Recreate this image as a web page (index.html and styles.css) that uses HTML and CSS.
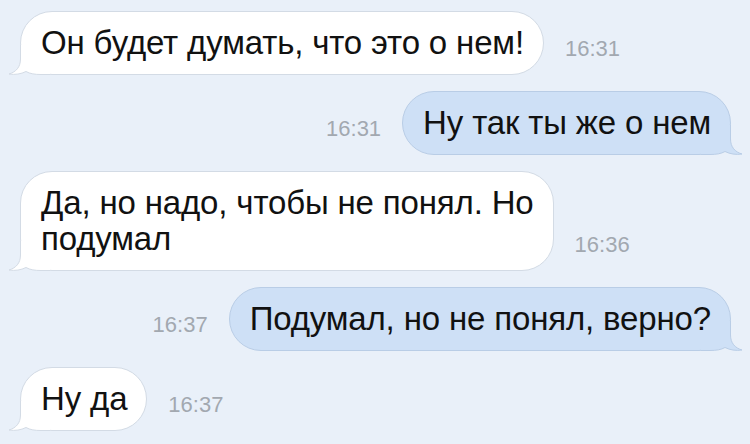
FILE: index.html
```html
<!DOCTYPE html>
<html lang="ru">
<head>
  <meta charset="UTF-8" />
  <title>Чат</title>
  <link rel="stylesheet" href="styles.css">
</head>
<body>
  <div class="chat">
    <div class="row in">
      <div class="bubble">
        <svg class="tail" width="42" height="30" viewBox="0 0 42 30"><path class="tail-fill" d="M12.5 0 L12.5 14 C12.5 22 8 27 1 29 C7 30 13 29 18 26.5 C22 28.8 27 29.5 33 29.5 L42 29.5 L42 0 Z"/><path class="tail-line" d="M12.5 0 L12.5 14 C12.5 22 8 27 1 29 C7 30 13 29 18 26.5 C22 28.8 27 29.5 33 29.5 L42 29.5"/></svg>
        <span class="text">Он будет думать, что это о нем!</span>
      </div>
      <span class="time">16:31</span>
    </div>

    <div class="row out">
      <span class="time">16:31</span>
      <div class="bubble">
        <svg class="tail" width="42" height="30" viewBox="0 0 42 30"><path class="tail-fill" d="M12.5 0 L12.5 14 C12.5 22 8 27 1 29 C7 30 13 29 18 26.5 C22 28.8 27 29.5 33 29.5 L42 29.5 L42 0 Z"/><path class="tail-line" d="M12.5 0 L12.5 14 C12.5 22 8 27 1 29 C7 30 13 29 18 26.5 C22 28.8 27 29.5 33 29.5 L42 29.5"/></svg>
        <span class="text">Ну так ты же о нем</span>
      </div>
    </div>

    <div class="row in">
      <div class="bubble">
        <svg class="tail" width="42" height="30" viewBox="0 0 42 30"><path class="tail-fill" d="M12.5 0 L12.5 14 C12.5 22 8 27 1 29 C7 30 13 29 18 26.5 C22 28.8 27 29.5 33 29.5 L42 29.5 L42 0 Z"/><path class="tail-line" d="M12.5 0 L12.5 14 C12.5 22 8 27 1 29 C7 30 13 29 18 26.5 C22 28.8 27 29.5 33 29.5 L42 29.5"/></svg>
        <span class="text">Да, но надо, чтобы не понял. Но<br>подумал</span>
      </div>
      <span class="time">16:36</span>
    </div>

    <div class="row out">
      <span class="time">16:37</span>
      <div class="bubble">
        <svg class="tail" width="42" height="30" viewBox="0 0 42 30"><path class="tail-fill" d="M12.5 0 L12.5 14 C12.5 22 8 27 1 29 C7 30 13 29 18 26.5 C22 28.8 27 29.5 33 29.5 L42 29.5 L42 0 Z"/><path class="tail-line" d="M12.5 0 L12.5 14 C12.5 22 8 27 1 29 C7 30 13 29 18 26.5 C22 28.8 27 29.5 33 29.5 L42 29.5"/></svg>
        <span class="text">Подумал, но не понял, верно?</span>
      </div>
    </div>

    <div class="row in">
      <div class="bubble">
        <svg class="tail" width="42" height="30" viewBox="0 0 42 30"><path class="tail-fill" d="M12.5 0 L12.5 14 C12.5 22 8 27 1 29 C7 30 13 29 18 26.5 C22 28.8 27 29.5 33 29.5 L42 29.5 L42 0 Z"/><path class="tail-line" d="M12.5 0 L12.5 14 C12.5 22 8 27 1 29 C7 30 13 29 18 26.5 C22 28.8 27 29.5 33 29.5 L42 29.5"/></svg>
        <span class="text">Ну да</span>
      </div>
      <span class="time">16:37</span>
    </div>
  </div>
</body>
</html>
```

FILE: styles.css
```css
body {
  margin: 0;
  background: #E9F0F9;
  font-family: 'Liberation Sans', Arial, sans-serif;
  color: #111;
}
.chat {
  display: flex;
  flex-direction: column;
  gap: 16px;
  padding: 11px 19px 0 20px;
}
.row {
  display: flex;
  align-items: flex-end;
  gap: 21px;
}
.row.out {
  justify-content: flex-end;
}
.bubble {
  position: relative;
  font-size: 33px;
  line-height: 36px;
  letter-spacing: -0.15px;
  padding: 13px 19px 13px 20px;
  border-radius: 32px;
  border: 1px solid #D3DBE5;
  background: #fff;
}
.out .bubble {
  background: #CEE0F6;
  border-color: #B9CDE6;
}
.text {
  position: relative;
}
.tail {
  position: absolute;
  left: -13px;
  bottom: -1px;
}
.out .tail {
  left: auto;
  right: -13px;
  transform: scaleX(-1);
}
.tail-fill {
  fill: #fff;
}
.tail-line {
  fill: none;
  stroke: #D3DBE5;
  stroke-width: 1;
}
.out .tail-fill {
  fill: #CEE0F6;
}
.out .tail-line {
  stroke: #B9CDE6;
}
.time {
  font-size: 22px;
  line-height: 1;
  color: #A2A8B0;
  margin-bottom: 15px;
}
```
